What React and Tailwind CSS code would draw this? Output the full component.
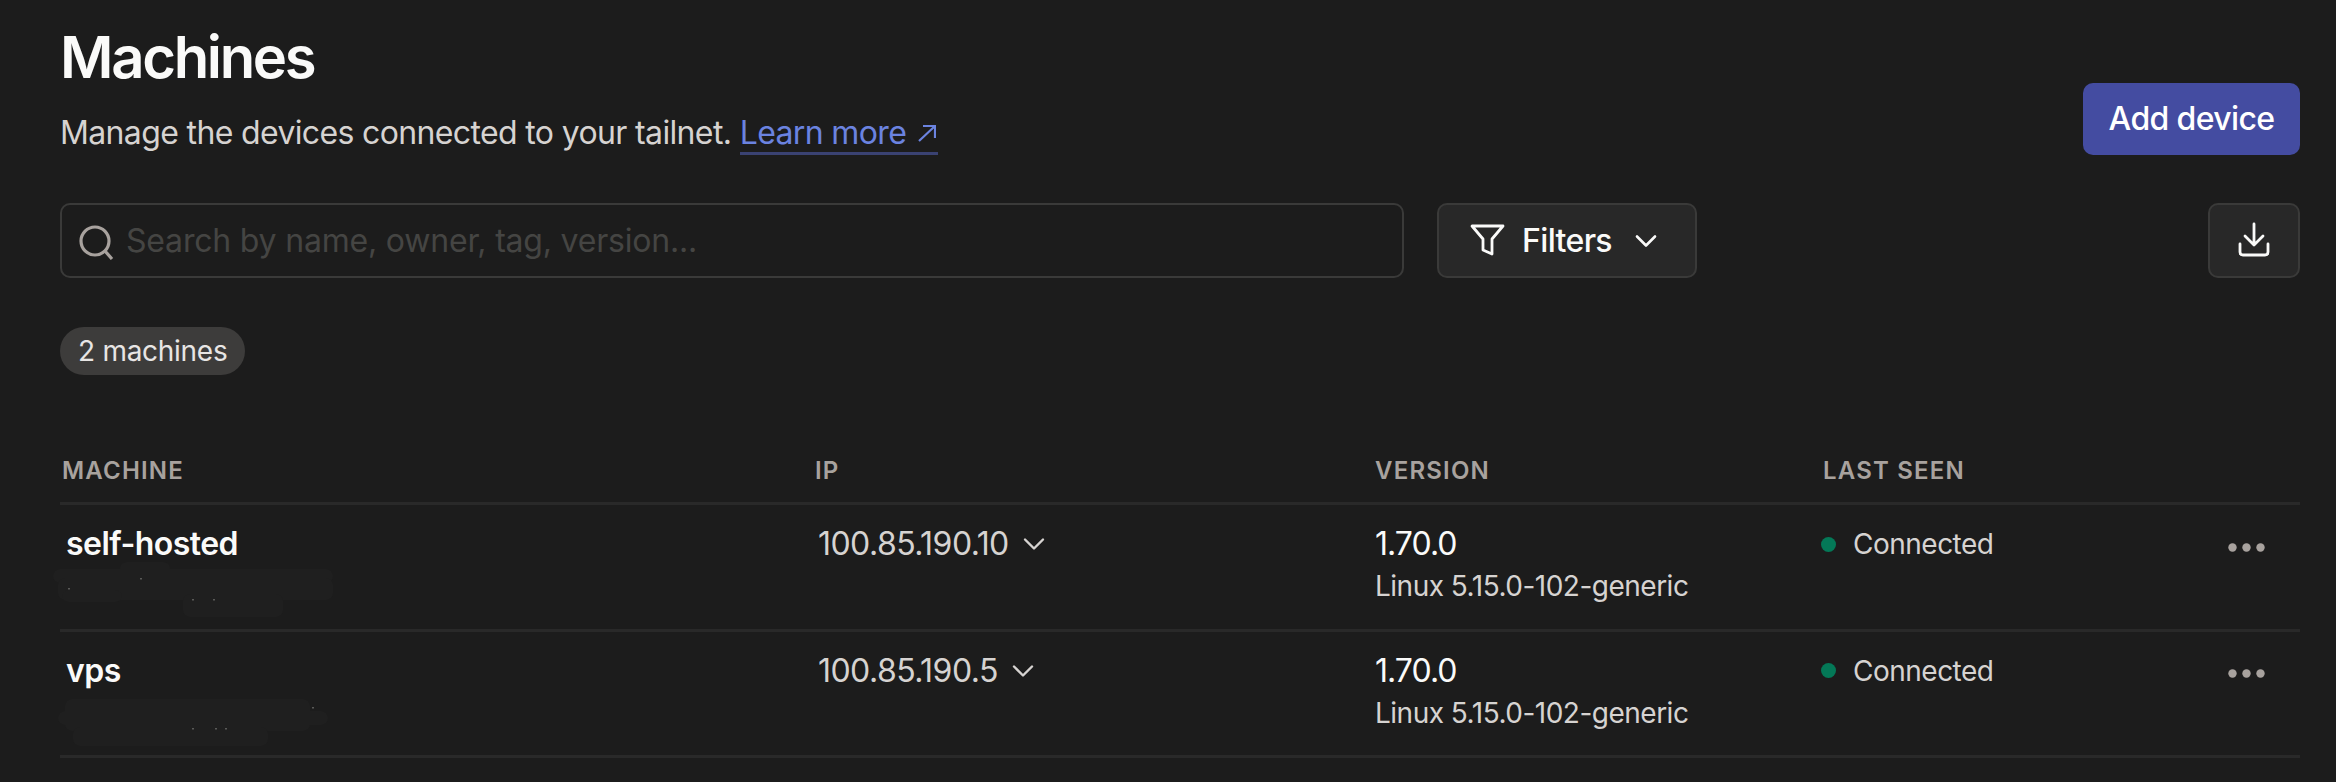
import { ChevronDown } from 'lucide-react';

const machines = [
  {
    name: 'self-hosted',
    ip: '100.85.190.10',
    // redaction smudge under the hostname
    smudge: [[70, 2, 50, 12], [3, 9, 280, 14], [8, 18, 275, 22], [12, 30, 60, 12], [133, 34, 100, 23]],
    specks: [[18, 28], [90, 18], [142, 39], [163, 39]],
  },
  {
    name: 'vps',
    ip: '100.85.190.5',
    smudge: [[15, 12, 245, 32], [8, 24, 270, 14], [23, 40, 195, 19]],
    specks: [[142, 41], [165, 41], [175, 41], [262, 20]],
  },
];

function FilterIcon() {
  return (
    <svg className="h-[36px] w-[36px]" viewBox="0 0 36 36" fill="none" stroke="currentColor" strokeWidth="2.8" strokeLinejoin="round">
      <path d="M2 3 H33 L22 16 V31 L13 27 V16 Z" />
    </svg>
  );
}

function DownloadIcon() {
  return (
    <svg className="h-[38px] w-[38px]" viewBox="0 0 38 38" fill="none" stroke="currentColor" strokeWidth="2.8" strokeLinecap="round" strokeLinejoin="round">
      <path d="M19 2 V23 M10 14 L19 23 L28 14" />
      <path d="M5 22 V30 Q5 33 8 33 H30 Q33 33 33 30 V22" />
    </svg>
  );
}

function SearchIcon() {
  return (
    <svg className="h-[38px] w-[38px] text-[#a8a29e]" viewBox="0 0 38 38" fill="none" stroke="currentColor" strokeWidth="3.2">
      <circle cx="19" cy="19" r="14" />
      <path d="M29 29 L36 37" />
    </svg>
  );
}

export default function App() {
  return (
    <div className="h-[782px] w-[2336px] overflow-hidden bg-[#1c1c1c] pl-[60px] pr-[36px] font-['Inter',sans-serif] text-[#d6d3d1]">
      {/* Page heading */}
      <div className="flex h-[155px] items-end justify-between">
        <div>
          <h1 className="text-[58px] leading-[68px] font-semibold tracking-[-0.04em] text-[#fafaf9]">Machines</h1>
          <p className="mt-[20px] text-[32px] leading-[44px] tracking-[-0.02em]">
            Manage the devices connected to your tailnet.{' '}
            <a className="inline-flex items-center gap-[12px] border-b-[3px] border-[#3a4272] pr-[2px] leading-[39px] text-[#6b83e0]">
              Learn more
              <svg className="h-[18px] w-[18px]" viewBox="0 0 18 18" fill="none" stroke="currentColor" strokeWidth="2.2">
                <path d="M1 17 L17 2 M5 2 H17 V14" />
              </svg>
            </a>
          </p>
        </div>
        <button className="h-[72px] w-[217px] rounded-[10px] bg-[#444ca1] text-[32px] font-medium tracking-[-0.02em] text-white">Add device</button>
      </div>

      {/* Search and filters */}
      <div className="mt-[48px] flex h-[75px] items-stretch">
        <div className="flex w-[1344px] items-center gap-[12px] rounded-[10px] border-2 border-[#3a3a39] pl-[14px]">
          <SearchIcon />
          <span className="text-[32px] tracking-[-0.006em] text-[#454543]">Search by name, owner, tag, version...</span>
        </div>
        <button className="ml-[33px] flex w-[260px] items-center gap-[16px] rounded-[10px] border-2 border-[#3a3a39] bg-[#282828] pl-[31px] text-[32px] font-medium tracking-[-0.02em] text-[#fafaf9]">
          <FilterIcon />
          Filters
          <ChevronDown className="h-[36px] w-[36px]" strokeWidth={1.75} />
        </button>
        <button className="ml-auto flex w-[92px] items-center justify-center rounded-[10px] border-2 border-[#3a3a39] bg-[#282828] text-[#fafaf9]">
          <DownloadIcon />
        </button>
      </div>

      <div className="mt-[49px] inline-flex h-[48px] items-center rounded-full bg-[#3d3c3b] px-[18px] text-[28px] tracking-[-0.01em] text-[#e7e5e4]">2 machines</div>

      {/* Machines table */}
      <div className="mt-[67px]">
        <div className="grid h-[63px] grid-cols-[755px_560px_448px_1fr] items-start border-b-[3px] border-[#292929] pt-[14px] text-[24px] leading-[30px] font-semibold tracking-[0.05em] text-[#a8a29e]">
          <div className="pl-[2px]">MACHINE</div>
          <div>IP</div>
          <div>VERSION</div>
          <div>LAST SEEN</div>
        </div>
        {machines.map((m) => (
          <div key={m.name} className="grid h-[126.5px] grid-cols-[755px_560px_448px_1fr] border-b-[3px] border-[#292929] pt-[19px]">
            <div className="pl-[6px]">
              <div className="text-[32px] leading-[40px] font-semibold tracking-[-0.017em] text-[#fafaf9]">{m.name}</div>
              <svg className="-mt-[4px] -ml-[16px] block" width="290" height="60" viewBox="0 0 290 60">
                {m.smudge.map(([x, y, w, h]) => (
                  <rect key={`${x}-${y}`} x={x} y={y} width={w} height={h} rx="7" fill="#1f1f1f" />
                ))}
                {m.specks.map(([x, y]) => (
                  <rect key={`${x}-${y}`} x={x} y={y} width="2" height="1.5" fill="#5a5a58" />
                ))}
              </svg>
            </div>
            <div className="flex h-[40px] items-center gap-[7px] pl-[3px] text-[32px] tracking-[-0.017em]">
              {m.ip}
              <ChevronDown className="h-[36px] w-[36px]" strokeWidth={1.6} />
            </div>
            <div>
              <div className="text-[32px] leading-[40px] tracking-[-0.03em] text-[#fafaf9]">1.70.0</div>
              <div className="mt-[2px] text-[28px] leading-[40px] tracking-[-0.018em]">Linux 5.15.0-102-generic</div>
            </div>
            <div className="flex h-[40px] items-center justify-between pr-[35px]">
              <div className="flex items-center gap-[17px] text-[28px] tracking-[-0.018em]">
                <span className="-ml-[2px] h-[15px] w-[15px] rounded-full bg-[#047857]"></span>
                Connected
              </div>
              <svg className="mt-[6px]" width="37" height="9" viewBox="0 0 37 9" fill="#a8a29e">
                <circle cx="4.5" cy="4.5" r="4.2" />
                <circle cx="18.5" cy="4.5" r="4.2" />
                <circle cx="32.5" cy="4.5" r="4.2" />
              </svg>
            </div>
          </div>
        ))}
      </div>
    </div>
  );
}
